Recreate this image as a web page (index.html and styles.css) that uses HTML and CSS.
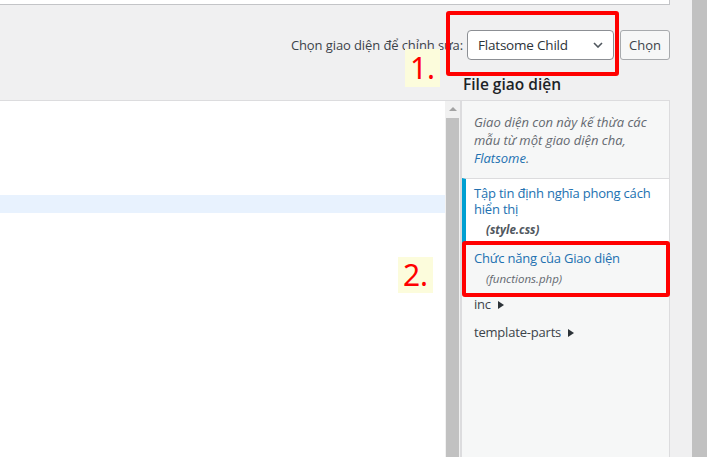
FILE: index.html
```html
<html>
  <head>
    <title>Sửa giao diện</title>
    <link rel="stylesheet" href="styles.css">
  </head>
  <body>
    <div class="screen">
      <div class="wrap">
        <div class="top-box"></div>

        <form class="theme-select">
          <label for="theme">Chọn giao diện để chỉnh sửa:</label>
          <div class="select" id="theme">
            <span>Flatsome Child</span>
            <svg width="10" height="6" viewBox="0 0 10 6">
              <path d="M1 1 L5 5 L9 1" fill="none" stroke="#50575e" stroke-width="1.6"/>
            </svg>
          </div>
          <button type="button">Chọn</button>
        </form>

        <div class="editor-row">
          <div class="editor">
            <div class="code">
              <div class="active-line"></div>
            </div>
            <div class="scrollbar">
              <div class="scroll-up"></div>
              <div class="scroll-thumb"></div>
            </div>
          </div>

          <div class="sidebar">
            <h2>File giao diện</h2>
            <div class="file-panel">
              <p class="description">
                Giao diện con này kế thừa các mẫu từ một giao diện cha,
                <a href="#">Flatsome</a>.
              </p>
              <ul class="files">
                <li class="current">
                  <a href="#">Tập tin định nghĩa phong cách hiển thị</a>
                  <span class="filename">(style.css)</span>
                </li>
                <li class="file">
                  <a href="#">Chức năng của Giao diện</a>
                  <span class="filename">(functions.php)</span>
                </li>
                <li class="folder folder-first">inc <span class="arrow"></span></li>
                <li class="folder">template-parts <span class="arrow"></span></li>
              </ul>
            </div>
          </div>
        </div>
      </div>

      <div class="page-scrollbar"></div>

      <!-- annotations drawn over the screenshot -->
      <div class="mark mark-1"></div>
      <div class="mark mark-2"></div>
      <div class="step step-1">1.</div>
      <div class="step step-2">2.</div>
    </div>
  </body>
</html>
```

FILE: styles.css
```css
html,
body {
  margin: 0;
  padding: 0;
  background-color: #f0f0f1;
  font-family: "Open Sans", "Noto Sans", sans-serif;
  color: #3c434a;
  overflow: hidden;
}

.screen {
  position: relative;
  display: flex;
  width: 707px;
  height: 457px;
}

.wrap {
  display: flex;
  flex-direction: column;
  width: 670px;
  margin-right: 22px;
}

.top-box {
  height: 4px;
  background-color: white;
  border-bottom: 1px solid #c3c4c7;
  border-right: 1px solid #c3c4c7;
}

.theme-select {
  display: flex;
  justify-content: flex-end;
  align-items: center;
  gap: 6px;
  height: 30px;
  margin: 25px 0 0 0;
}

.theme-select label {
  font-size: 13px;
  letter-spacing: -0.1px;
  margin-right: -2px;
}

.select {
  display: flex;
  align-items: center;
  justify-content: space-between;
  box-sizing: border-box;
  width: 147px;
  height: 30px;
  padding: 0 10px 0 10px;
  background-color: white;
  border: 1px solid #8c8f94;
  border-radius: 4px;
  font-size: 13.5px;
  letter-spacing: -0.2px;
  color: #2c3338;
}

.theme-select button {
  box-sizing: border-box;
  width: 50px;
  height: 30px;
  padding: 0;
  background-color: #f6f7f7;
  border: 1px solid #a7aaad;
  border-radius: 3px;
  font-family: inherit;
  font-size: 13px;
  color: #3c434a;
}

.editor-row {
  display: flex;
  flex: 1;
}

.editor {
  display: flex;
  width: 460px;
  margin-top: 40px;
  background-color: white;
  border-top: 1px solid #dcdcde;
  border-right: 1px solid #dcdcde;
}

.code {
  flex: 1;
}

.active-line {
  height: 18px;
  margin-top: 94px;
  background-color: #e8f2fe;
}

.scrollbar {
  display: flex;
  flex-direction: column;
  width: 15px;
  background-color: #f1f1f1;
}

.scroll-up {
  height: 17px;
  position: relative;
}

.scroll-up::after {
  content: "";
  position: absolute;
  left: 4px;
  top: 6px;
  border-left: 4px solid transparent;
  border-right: 4px solid transparent;
  border-bottom: 4px solid #a3a3a3;
}

.scroll-thumb {
  flex: 1;
  margin: 0 1px;
  background-color: #c1c1c1;
}

.sidebar {
  display: flex;
  flex-direction: column;
  width: 209px;
}

.sidebar h2 {
  margin: 0;
  padding: 14px 0 6px 2px;
  font-size: 15.5px;
  font-weight: 600;
  line-height: 20px;
  color: #1d2327;
}

.file-panel {
  flex: 1;
  background-color: #f6f7f7;
  border: 1px solid #dcdcde;
  border-bottom: none;
}

.description {
  margin: 0;
  padding: 12px 12px 11px 12px;
  font-size: 13px;
  font-style: italic;
  line-height: 18px;
  color: #646970;
}

.description a,
.files a {
  color: #2271b1;
  text-decoration: none;
}

.files {
  list-style: none;
  margin: 0;
  padding: 0;
}

.files li {
  font-size: 13px;
  letter-spacing: -0.2px;
  line-height: 16px;
}

.filename {
  display: block;
  margin-top: 5px;
  padding-left: 12px;
  font-size: 11.5px;
  font-style: italic;
  letter-spacing: 0;
  color: #646970;
}

.current {
  padding: 6px 8px 6px 8px;
  background-color: white;
  border-left: 4px solid #00a0d2;
  border-top: 1px solid #dcdcde;
}

.current .filename {
  font-weight: 700;
  color: #50575e;
}

.file {
  padding: 6px 8px 6px 12px;
}

.folder {
  padding: 6px 12px;
  color: #3c434a;
}

.folder-first {
  padding-top: 3px;
}

.arrow {
  display: inline-block;
  margin-left: 4px;
  border-top: 4px solid transparent;
  border-bottom: 4px solid transparent;
  border-left: 6px solid #2c3338;
}

.page-scrollbar {
  width: 15px;
  background-color: #c1c1c1;
}

.mark {
  position: absolute;
  box-sizing: border-box;
  border: 4px solid #ff0000;
  border-radius: 3px;
}

.mark-1 {
  left: 446px;
  top: 11px;
  width: 173px;
  height: 65px;
}

.mark-2 {
  left: 462px;
  top: 241px;
  width: 208px;
  height: 56px;
}

.step {
  position: absolute;
  width: 35px;
  background-color: #fcfcdc;
  color: #ff0000;
  font-family: "Noto Sans", sans-serif;
  font-size: 30px;
  text-align: center;
}

.step-1 {
  left: 405px;
  top: 49px;
  height: 38px;
  line-height: 38px;
}

.step-2 {
  left: 398px;
  top: 257px;
  height: 36px;
  line-height: 36px;
}
```
